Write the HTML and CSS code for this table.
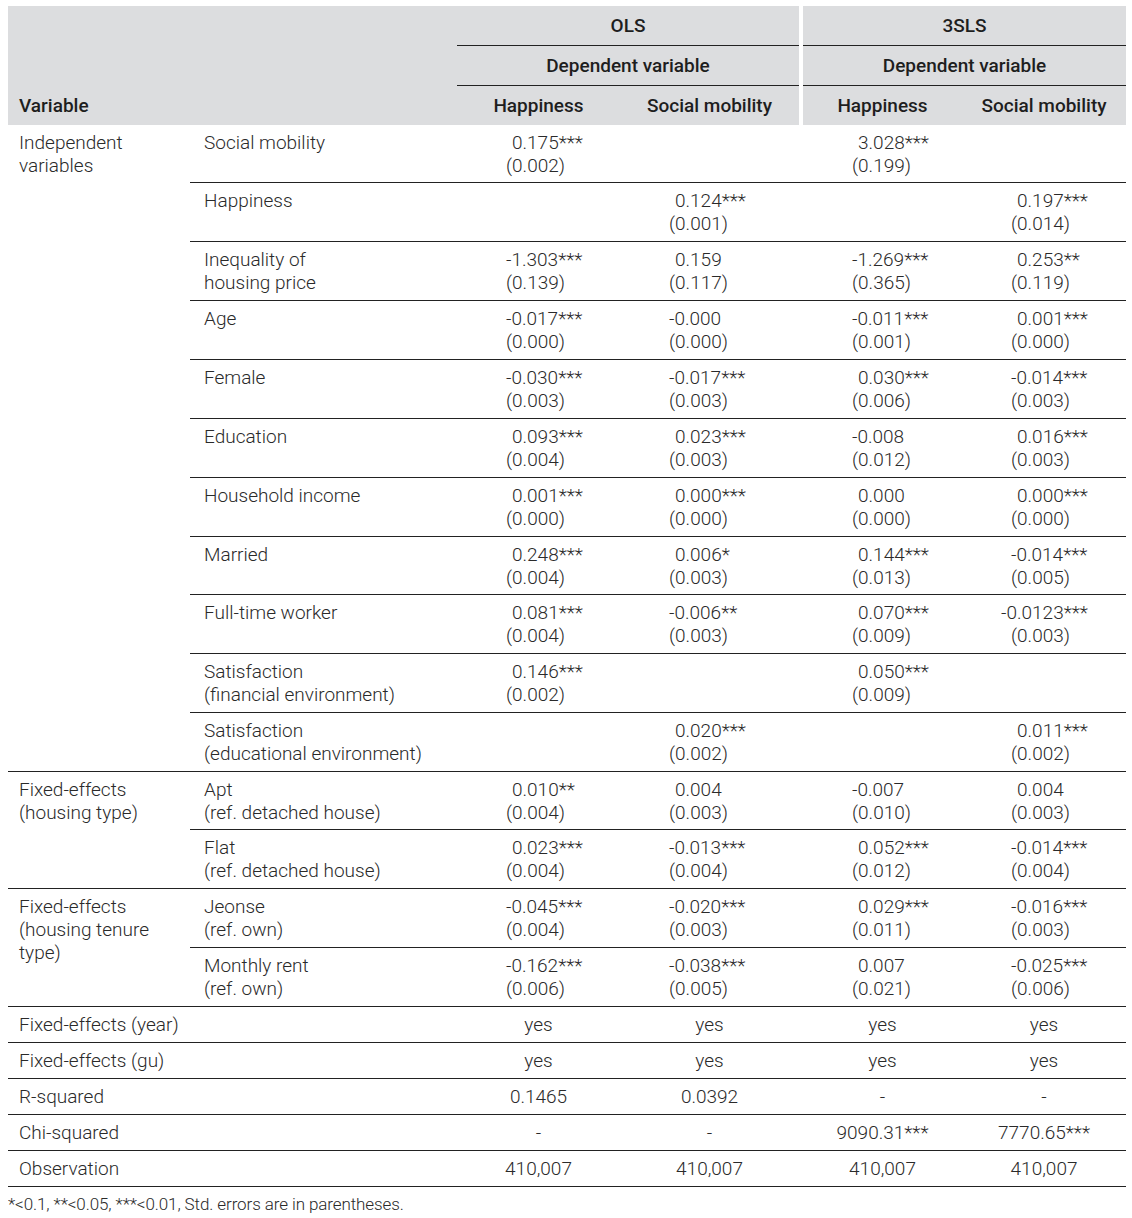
FILE: index.html
```html
<!DOCTYPE html>
<html lang="en">
<head>
<meta charset="utf-8">
<title>Regression results</title>
<link rel="stylesheet" href="styles.css">
</head>
<body>
<table class="tbl">
  <colgroup>
    <col class="w-grp"><col class="w-var"><col class="w-c3"><col class="w-c4"><col class="w-gap"><col class="w-c5"><col class="w-c6">
  </colgroup>
  <thead>
    <tr>
      <th colspan="2" class="h"></th>
      <th colspan="2" class="h h-ul">OLS</th>
      <th rowspan="3" class="gap"></th>
      <th colspan="2" class="h h-ul">3SLS</th>
    </tr>
    <tr>
      <th colspan="2" class="h"></th>
      <th colspan="2" class="h h-ul">Dependent variable</th>
      <th colspan="2" class="h h-ul">Dependent variable</th>
    </tr>
    <tr>
      <th colspan="2" class="h h-left">Variable</th>
      <th class="h">Happiness</th>
      <th class="h">Social mobility</th>
      <th class="h">Happiness</th>
      <th class="h">Social mobility</th>
    </tr>
  </thead>
  <tbody>
    <tr class="r58">
      <td rowspan="11" class="grp">Independent<br>variables</td>
      <td class="var">Social mobility</td>
      <td class="v"><span class="p">0.175***</span><br>(0.002)</td>
      <td class="v"></td>
      <td class="gp"></td>
      <td class="v"><span class="p">3.028***</span><br>(0.199)</td>
      <td class="v"></td>
    </tr>
    <tr>
      <td class="var">Happiness</td>
      <td class="v"></td>
      <td class="v"><span class="p">0.124***</span><br>(0.001)</td>
      <td class="gp"></td>
      <td class="v"></td>
      <td class="v"><span class="p">0.197***</span><br>(0.014)</td>
    </tr>
    <tr>
      <td class="var">Inequality of<br>housing price</td>
      <td class="v">-1.303***<br>(0.139)</td>
      <td class="v"><span class="p">0.159</span><br>(0.117)</td>
      <td class="gp"></td>
      <td class="v">-1.269***<br>(0.365)</td>
      <td class="v"><span class="p">0.253**</span><br>(0.119)</td>
    </tr>
    <tr>
      <td class="var">Age</td>
      <td class="v">-0.017***<br>(0.000)</td>
      <td class="v">-0.000<br>(0.000)</td>
      <td class="gp"></td>
      <td class="v">-0.011***<br>(0.001)</td>
      <td class="v"><span class="p">0.001***</span><br>(0.000)</td>
    </tr>
    <tr>
      <td class="var">Female</td>
      <td class="v">-0.030***<br>(0.003)</td>
      <td class="v">-0.017***<br>(0.003)</td>
      <td class="gp"></td>
      <td class="v"><span class="p">0.030***</span><br>(0.006)</td>
      <td class="v">-0.014***<br>(0.003)</td>
    </tr>
    <tr>
      <td class="var">Education</td>
      <td class="v"><span class="p">0.093***</span><br>(0.004)</td>
      <td class="v"><span class="p">0.023***</span><br>(0.003)</td>
      <td class="gp"></td>
      <td class="v">-0.008<br>(0.012)</td>
      <td class="v"><span class="p">0.016***</span><br>(0.003)</td>
    </tr>
    <tr>
      <td class="var">Household income</td>
      <td class="v"><span class="p">0.001***</span><br>(0.000)</td>
      <td class="v"><span class="p">0.000***</span><br>(0.000)</td>
      <td class="gp"></td>
      <td class="v"><span class="p">0.000</span><br>(0.000)</td>
      <td class="v"><span class="p">0.000***</span><br>(0.000)</td>
    </tr>
    <tr class="r58">
      <td class="var">Married</td>
      <td class="v"><span class="p">0.248***</span><br>(0.004)</td>
      <td class="v"><span class="p">0.006*</span><br>(0.003)</td>
      <td class="gp"></td>
      <td class="v"><span class="p">0.144***</span><br>(0.013)</td>
      <td class="v">-0.014***<br>(0.005)</td>
    </tr>
    <tr>
      <td class="var">Full-time worker</td>
      <td class="v"><span class="p">0.081***</span><br>(0.004)</td>
      <td class="v">-0.006**<br>(0.003)</td>
      <td class="gp"></td>
      <td class="v"><span class="p">0.070***</span><br>(0.009)</td>
      <td class="v"><span class="wide">-0.0123***</span><br>(0.003)</td>
    </tr>
    <tr>
      <td class="var">Satisfaction<br>(financial environment)</td>
      <td class="v"><span class="p">0.146***</span><br>(0.002)</td>
      <td class="v"></td>
      <td class="gp"></td>
      <td class="v"><span class="p">0.050***</span><br>(0.009)</td>
      <td class="v"></td>
    </tr>
    <tr>
      <td class="var">Satisfaction<br>(educational environment)</td>
      <td class="v"></td>
      <td class="v"><span class="p">0.020***</span><br>(0.002)</td>
      <td class="gp"></td>
      <td class="v"></td>
      <td class="v"><span class="p">0.011***</span><br>(0.002)</td>
    </tr>

    <tr class="r58">
      <td rowspan="2" class="grp">Fixed-effects<br>(housing type)</td>
      <td class="var">Apt<br>(ref. detached house)</td>
      <td class="v"><span class="p">0.010**</span><br>(0.004)</td>
      <td class="v"><span class="p">0.004</span><br>(0.003)</td>
      <td class="gp"></td>
      <td class="v">-0.007<br>(0.010)</td>
      <td class="v"><span class="p">0.004</span><br>(0.003)</td>
    </tr>
    <tr>
      <td class="var">Flat<br>(ref. detached house)</td>
      <td class="v"><span class="p">0.023***</span><br>(0.004)</td>
      <td class="v">-0.013***<br>(0.004)</td>
      <td class="gp"></td>
      <td class="v"><span class="p">0.052***</span><br>(0.012)</td>
      <td class="v">-0.014***<br>(0.004)</td>
    </tr>

    <tr>
      <td rowspan="2" class="grp">Fixed-effects<br>(housing tenure<br>type)</td>
      <td class="var">Jeonse<br>(ref. own)</td>
      <td class="v">-0.045***<br>(0.004)</td>
      <td class="v">-0.020***<br>(0.003)</td>
      <td class="gp"></td>
      <td class="v"><span class="p">0.029***</span><br>(0.011)</td>
      <td class="v">-0.016***<br>(0.003)</td>
    </tr>
    <tr>
      <td class="var">Monthly rent<br>(ref. own)</td>
      <td class="v">-0.162***<br>(0.006)</td>
      <td class="v">-0.038***<br>(0.005)</td>
      <td class="gp"></td>
      <td class="v"><span class="p">0.007</span><br>(0.021)</td>
      <td class="v">-0.025***<br>(0.006)</td>
    </tr>

    <tr class="single">
      <td colspan="2" class="grp">Fixed-effects (year)</td>
      <td class="c">yes</td><td class="c">yes</td><td class="gp"></td><td class="c">yes</td><td class="c">yes</td>
    </tr>
    <tr class="single">
      <td colspan="2" class="grp">Fixed-effects (gu)</td>
      <td class="c">yes</td><td class="c">yes</td><td class="gp"></td><td class="c">yes</td><td class="c">yes</td>
    </tr>
    <tr class="single">
      <td colspan="2" class="grp">R-squared</td>
      <td class="c">0.1465</td><td class="c">0.0392</td><td class="gp"></td><td class="c">-</td><td class="c">-</td>
    </tr>
    <tr class="single">
      <td colspan="2" class="grp">Chi-squared</td>
      <td class="c">-</td><td class="c">-</td><td class="gp"></td><td class="c">9090.31***</td><td class="c">7770.65***</td>
    </tr>
    <tr class="single">
      <td colspan="2" class="grp">Observation</td>
      <td class="c">410,007</td><td class="c">410,007</td><td class="gp"></td><td class="c">410,007</td><td class="c">410,007</td>
    </tr>
  </tbody>
</table>
<p class="note">*&lt;0.1, **&lt;0.05, ***&lt;0.01, Std. errors are in parentheses.</p>
</body>
</html>
```
FILE: styles.css
```css
html, body {
  background: #ffffff;
}
body {
  margin: 6px 6px 0 8px;
  font-family: Roboto, "Liberation Sans", sans-serif;
  font-weight: 300;
  color: #2a2a2a;
}
.tbl {
  width: 1118px;
  table-layout: fixed;
  border-collapse: collapse;
  border-spacing: 0;
  font-size: 19px;
  line-height: 23px;
}
.w-grp { width: 182px; }
.w-var { width: 267px; }
.w-c3 { width: 163px; }
.w-c4 { width: 179px; }
.w-gap { width: 4px; }
.w-c5 { width: 159px; }
.w-c6 { width: 164px; }

.h {
  background: #dcdddf;
  color: #1e1e1e;
  font-weight: 500;
  text-align: center;
  padding: 8px 0 8px;
  vertical-align: middle;
}
.h-ul {
  border-bottom: 1px solid #222222;
}
.h-left {
  text-align: left;
  padding-left: 11px;
}
.gap {
  background: #ffffff;
  padding: 0;
}
tbody td {
  padding: 6px 0;
  vertical-align: top;
  border-bottom: 1px solid #222222;
}
.r58 td {
  padding-bottom: 5px;
}
.grp {
  padding-left: 11px;
}
.var {
  padding-left: 14px;
}
.v {
  padding-left: 49px;
  text-align: left;
}
.p {
  padding-left: 6px;
}
.wide {
  margin-left: -10px;
}
.gp {
  padding: 0;
}
.c {
  text-align: center;
}
.single td {
  vertical-align: middle;
}
.note {
  margin: 7px 0 0;
  font-size: 17px;
  line-height: 20px;
  color: #2a2a2a;
  letter-spacing: -0.1px;
}
```
